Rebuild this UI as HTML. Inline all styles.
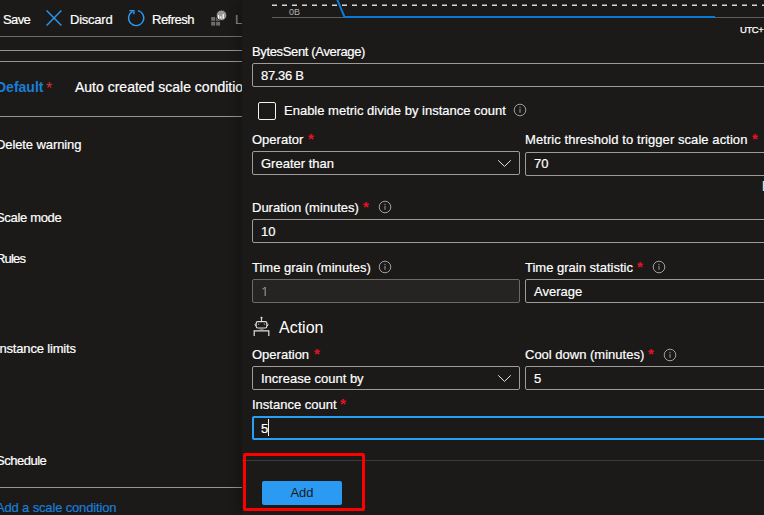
<!DOCTYPE html>
<html><head><meta charset="utf-8">
<style>
*{box-sizing:border-box;margin:0;padding:0}
html,body{width:764px;height:515px;overflow:hidden;background:#1b1a19;font-family:"Liberation Sans",sans-serif;color:#ffffff}
.a{position:absolute;white-space:nowrap}
.t{position:absolute;white-space:nowrap;font-size:13px;line-height:16px;-webkit-text-stroke-width:0.2px}
.hl{position:absolute;height:1px;background:#979593}
.box{position:absolute;border:1px solid #9e9c9a;border-radius:2px;height:24px}
.req{position:absolute;white-space:nowrap;color:#e81123;font-size:15px;line-height:16px;font-weight:bold}
#panel{position:absolute;left:242px;top:0;width:522px;height:515px;background:#1b1a19;box-shadow:-5px 0 9px rgba(0,0,0,.2)}
</style></head><body>
<!-- left blade -->
<div class="t" style="left:3px;top:12px;letter-spacing:-0.6px">Save</div>
<svg class="a" style="left:46px;top:10px" width="16" height="16" viewBox="0 0 16 16"><path d="M0.6 0.6L15.4 15.4M15.4 0.6L0.6 15.4" stroke="#2a98f0" stroke-width="1.4" fill="none"/></svg>
<div class="t" style="left:70px;top:12px;letter-spacing:-0.23px">Discard</div>
<svg class="a" style="left:120px;top:5px" width="30" height="25" viewBox="0 0 30 25"><path d="M17.9 5.6A7.6 7.6 0 1 1 12.6 6.3" stroke="#2a98f0" stroke-width="1.4" fill="none"/><path d="M9.3 5.6H13.9V9.3" stroke="#2a98f0" stroke-width="1.4" fill="none"/></svg>
<div class="t" style="left:152px;top:12px;letter-spacing:-0.5px">Refresh</div>
<svg class="a" style="left:200px;top:0px" width="30" height="30" viewBox="200 0 30 30"><rect x="211.2" y="17" width="4" height="3.8" fill="#6e6d6c"/><rect x="216.1" y="17" width="4" height="3.8" fill="#6e6d6c"/><rect x="211.2" y="21.8" width="4" height="3.8" fill="#6e6d6c"/><rect x="216.1" y="21.8" width="4" height="3.8" fill="#6e6d6c"/><circle cx="221.5" cy="15.3" r="5.2" fill="#9a9896" stroke="#1b1a19" stroke-width="0.8"/><rect x="218" y="15" width="1.2" height="3.7" fill="#fff"/><rect x="220.2" y="16.3" width="1.2" height="2.4" fill="#fff"/><rect x="222.6" y="14" width="1.2" height="4.7" fill="#fff"/></svg>
<div class="t" style="left:235px;top:12px;color:#8a8886">L</div>
<div class="hl" style="left:0;top:36px;width:242px;background:#6e6d6c"></div>
<div class="hl" style="left:0;top:50px;width:242px"></div>
<div class="hl" style="left:0;top:61px;width:242px"></div>
<div class="a" style="left:-4px;top:79px;font-size:14px;font-weight:bold;color:#1a7ed6">Default</div>
<div class="req" style="left:46px;top:81px;color:#d13438;font-weight:normal;font-size:16px">*</div>
<div class="a" style="left:75px;top:79px;font-size:14px;-webkit-text-stroke-width:0.2px">Auto created scale condition</div>
<div class="hl" style="left:0;top:116px;width:242px"></div>
<div class="t" style="left:-4px;top:137px;letter-spacing:-0.1px">Delete warning</div>
<div class="t" style="left:-4px;top:210px;letter-spacing:-0.33px">Scale mode</div>
<div class="t" style="left:-4px;top:251px;letter-spacing:-0.8px">Rules</div>
<div class="t" style="left:-4px;top:341px;letter-spacing:-0.17px">Instance limits</div>
<div class="t" style="left:-4px;top:453px;letter-spacing:-0.48px">Schedule</div>
<div class="hl" style="left:0;top:487px;width:242px"></div>
<div class="t" style="left:-4px;top:500px;color:#1a7ed6;letter-spacing:-0.155px">Add a scale condition</div>

<!-- right panel -->
<div id="panel"></div>
<!-- chart -->
<svg class="a" style="left:242px;top:0" width="522" height="40" viewBox="242 0 522 40">
<line x1="272" y1="5.3" x2="764" y2="5.3" stroke="#d8d6d4" stroke-width="1.4" stroke-dasharray="5 5"/>
<line x1="272" y1="17.5" x2="764" y2="17.5" stroke="#605e5c" stroke-width="1"/>
<polyline points="337,-1 344.5,17 715,17" stroke="#0a7ad6" stroke-width="2" fill="none"/>
</svg>
<div class="a" style="left:289px;top:8px;font-size:9px;line-height:9px;color:#b3b0ad">0B</div>
<div class="a" style="left:740px;top:25px;font-size:9.5px;line-height:9px;letter-spacing:-0.45px;-webkit-text-stroke-width:0.25px;color:#fff">UTC+</div>

<div class="t" style="left:252px;top:44px;letter-spacing:-0.35px">BytesSent (Average)</div>
<div class="box" style="left:252px;top:63px;width:540px"></div>
<div class="t" style="left:261px;top:68px;letter-spacing:-0.33px">87.36 B</div>
<div class="a" style="left:258px;top:102px;width:18px;height:18px;border:1px solid #f3f2f1;border-radius:2px"></div>
<div class="t" style="left:284px;top:103px">Enable metric divide by instance count</div>
<svg class="a" style="left:513px;top:103px" width="14" height="14" viewBox="0 0 14 14"><circle cx="7" cy="7" r="5.8" stroke="#a19f9d" fill="none"/><rect x="6.4" y="5.8" width="1.2" height="4" fill="#8a8886"/><rect x="6.4" y="3.8" width="1.2" height="1.2" fill="#8a8886"/></svg>

<div class="t" style="left:252px;top:132px">Operator</div>
<div class="req" style="left:308px;top:131px">*</div>
<div class="box" style="left:252px;top:151px;width:268px"></div>
<div class="t" style="left:261px;top:156px">Greater than</div>
<svg class="a" style="left:497px;top:159px" width="14" height="9" viewBox="0 0 14 9"><polyline points="1.2,1.3 7.5,7.4 13.8,1.3" stroke="#e8e6e4" stroke-width="1" fill="none"/></svg>
<div class="t" style="left:525px;top:132px;letter-spacing:0.07px">Metric threshold to trigger scale action</div>
<div class="req" style="left:752px;top:131px">*</div>
<div class="box" style="left:525px;top:152px;width:300px"></div>
<div class="t" style="left:534px;top:156px">70</div>
<div class="a" style="left:763px;top:181px;width:1px;height:10px;background:#b3dbf8;box-shadow:-0.5px 0 0 rgba(150,200,240,.5)"></div>

<div class="t" style="left:252px;top:200px">Duration (minutes)</div>
<div class="req" style="left:363px;top:199px">*</div>
<svg class="a" style="left:378px;top:200px" width="14" height="14" viewBox="0 0 14 14"><circle cx="7" cy="7" r="5.8" stroke="#a19f9d" fill="none"/><rect x="6.4" y="5.8" width="1.2" height="4" fill="#8a8886"/><rect x="6.4" y="3.8" width="1.2" height="1.2" fill="#8a8886"/></svg>
<div class="box" style="left:252px;top:219px;width:540px"></div>
<div class="t" style="left:261px;top:224px">10</div>

<div class="t" style="left:252px;top:260px">Time grain (minutes)</div>
<svg class="a" style="left:378px;top:260px" width="14" height="14" viewBox="0 0 14 14"><circle cx="7" cy="7" r="5.8" stroke="#a19f9d" fill="none"/><rect x="6.4" y="5.8" width="1.2" height="4" fill="#8a8886"/><rect x="6.4" y="3.8" width="1.2" height="1.2" fill="#8a8886"/></svg>
<div class="box" style="left:252px;top:279px;width:268px;background:#252423;border-color:#6b6a69"></div>
<svg class="a" style="left:260px;top:285px" width="10" height="14" viewBox="260 285 10 14"><path d="M265.2 287V296" stroke="#8a8886" stroke-width="1.3"/><path d="M265.2 287.4L262.5 289.2" stroke="#8a8886" stroke-width="1.1"/></svg>
<div class="t" style="left:525px;top:260px">Time grain statistic</div>
<div class="req" style="left:637px;top:259px">*</div>
<svg class="a" style="left:652px;top:260px" width="14" height="14" viewBox="0 0 14 14"><circle cx="7" cy="7" r="5.8" stroke="#a19f9d" fill="none"/><rect x="6.4" y="5.8" width="1.2" height="4" fill="#8a8886"/><rect x="6.4" y="3.8" width="1.2" height="1.2" fill="#8a8886"/></svg>
<div class="box" style="left:525px;top:279px;width:300px"></div>
<div class="t" style="left:534px;top:284px">Average</div>

<svg class="a" style="left:252px;top:315px" width="20" height="22" viewBox="252 315 20 22">
<circle cx="261.5" cy="317.8" r="1.1" fill="#e1dfdd"/>
<line x1="261.5" y1="318.5" x2="261.5" y2="321" stroke="#e1dfdd" stroke-width="1.1"/>
<rect x="256.2" y="321.6" width="10.6" height="6.4" rx="1.5" stroke="#e1dfdd" stroke-width="1.1" fill="none"/>
<rect x="258" y="323.6" width="1.2" height="1.2" fill="#a19f9d"/><rect x="263.8" y="323.6" width="1.2" height="1.2" fill="#a19f9d"/>
<path d="M256.2 323.4L254.8 324.8L256.2 326.2M266.8 323.4L268.2 324.8L266.8 326.2" stroke="#e1dfdd" stroke-width="1" fill="none"/>
<rect x="259.5" y="328.2" width="4" height="1.6" fill="#8a8886"/>
<path d="M254.2 336V330.8H268.8V336" stroke="#e1dfdd" stroke-width="1.2" fill="none"/>
</svg>
<div class="a" style="left:279px;top:319px;font-size:16px;line-height:18px">Action</div>

<div class="t" style="left:252px;top:347px">Operation</div>
<div class="req" style="left:314px;top:346px">*</div>
<div class="box" style="left:252px;top:366px;width:268px"></div>
<div class="t" style="left:261px;top:371px">Increase count by</div>
<svg class="a" style="left:497px;top:374px" width="14" height="9" viewBox="0 0 14 9"><polyline points="1.2,1.3 7.5,7.4 13.8,1.3" stroke="#e8e6e4" stroke-width="1" fill="none"/></svg>
<div class="t" style="left:525px;top:347px">Cool down (minutes)</div>
<div class="req" style="left:648px;top:346px">*</div>
<svg class="a" style="left:663px;top:348px" width="14" height="14" viewBox="0 0 14 14"><circle cx="7" cy="7" r="5.8" stroke="#a19f9d" fill="none"/><rect x="6.4" y="5.8" width="1.2" height="4" fill="#8a8886"/><rect x="6.4" y="3.8" width="1.2" height="1.2" fill="#8a8886"/></svg>
<div class="box" style="left:525px;top:366px;width:300px"></div>
<div class="t" style="left:534px;top:371px">5</div>

<div class="t" style="left:252px;top:397px">Instance count</div>
<div class="req" style="left:340px;top:396px">*</div>
<div class="box" style="left:252px;top:416px;width:540px;border:2px solid #28a0f5"></div>
<div class="t" style="left:261px;top:421px">5</div>
<div class="a" style="left:268px;top:419px;width:1px;height:17px;background:#f3f2f1"></div>

<div class="a" style="left:242px;top:460px;width:522px;height:1px;background:#3b3a39"></div>
<div class="a" style="left:262px;top:481px;width:80px;height:24px;background:#2b9af3;border-radius:2px;color:#1b1a19;font-size:13px;line-height:24px;text-align:center">Add</div>
<div class="a" style="left:243px;top:453px;width:122px;height:58px;border:3px solid #ff0000;border-radius:2px"></div>
</body></html>
